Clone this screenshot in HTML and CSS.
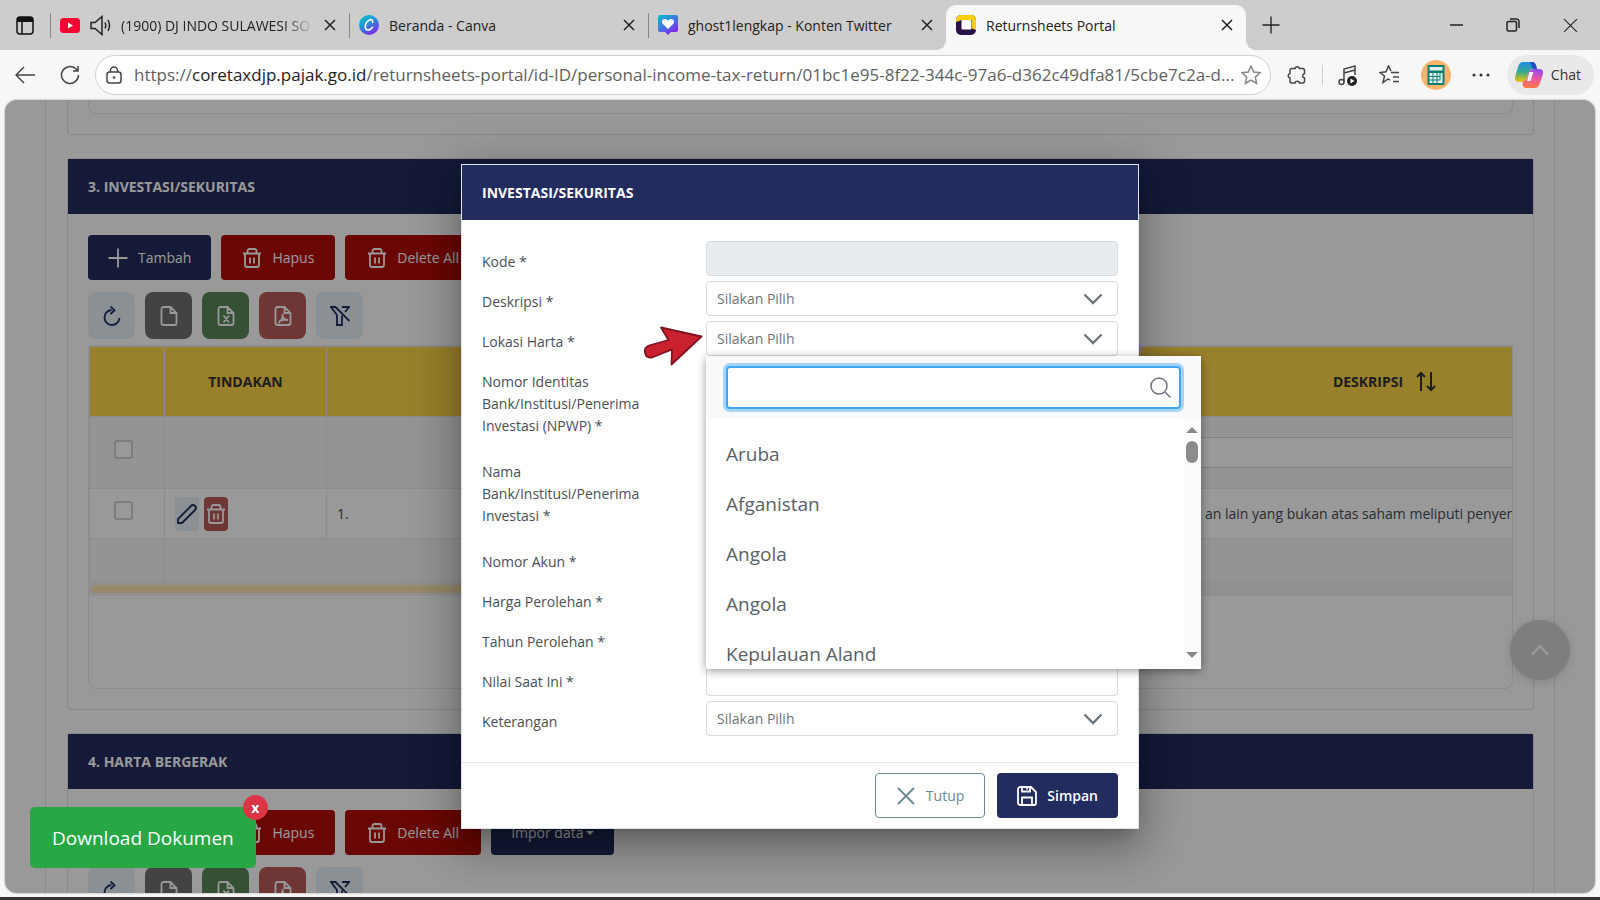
FILE: index.html
```html
<!DOCTYPE html>
<html lang="id">
<head>
<meta charset="utf-8">
<title>Returnsheets Portal</title>
<link rel="stylesheet" href="styles.css">
</head>
<body>
<svg class="sprite" aria-hidden="true">
  <symbol id="i-x" viewBox="0 0 14 14"><path d="M2 2l10 10M12 2L2 12"/></symbol>
  <symbol id="i-trash" viewBox="0 0 20 20"><path d="M1 5.500h18M5.500 5.500V3a2 2 0 0 1 2-2h5a2 2 0 0 1 2 2v2.500M3 5.500V17a2 2 0 0 0 2 2h10a2 2 0 0 0 2-2V5.500M8 9.500v6M12 9.500v6"/></symbol>
  <symbol id="i-plus" viewBox="0 0 20 20"><path d="M10 0.500v19M0.500 10h19"/></symbol>
  <symbol id="i-refresh" viewBox="0 0 20 20"><path d="M9.500 4A7.500 7.500 0 1 0 17.500 12M8.500 0.500L12.500 4.200 8.500 8"/></symbol>
  <symbol id="i-file" viewBox="0 0 20 20"><path d="M11.500 1H4.500a2 2 0 0 0-2 2v14a2 2 0 0 0 2 2h11a2 2 0 0 0 2-2V7zM11.500 1v6h6"/></symbol>
  <symbol id="i-excel" viewBox="0 0 20 20"><path d="M11.500 1H4.500a2 2 0 0 0-2 2v14a2 2 0 0 0 2 2h11a2 2 0 0 0 2-2V7zM11.500 1v6h6M7.500 9.500l5.500 7M13 9.500l-5.500 7"/></symbol>
  <symbol id="i-pdf" viewBox="0 0 20 20"><path d="M11.500 1H4.500a2 2 0 0 0-2 2v14a2 2 0 0 0 2 2h11a2 2 0 0 0 2-2V7zM11.500 1v6h6M9.500 8c.5 3.500-1.500 7-4 9M9.500 9c0 3 2.500 5 5.500 5M6.500 15c2.500-1.500 5-1.500 8.500-1"/></symbol>
  <symbol id="i-filter" viewBox="0 0 20 20"><path d="M12 1h7l-4 5M19.500 15L5.500 1H1l6 8v10h5V9.500"/></symbol>
  <symbol id="i-down" viewBox="0 0 20 12"><path d="M1.500 1.500L10 10l8.500-8.500"/></symbol>
</svg>

<header class="tabs">
  <button class="ib" aria-label="Tab actions"><svg width="18" height="19" viewBox="0 0 18 19"><rect x="1" y="1" width="16" height="17" rx="3" fill="none" stroke="#111" stroke-width="1.500"/><path d="M1 6V4a3 3 0 0 1 3-3h10a3 3 0 0 1 3 3v2z" fill="#111"/><path d="M6 6v12" stroke="#111" stroke-width="1.500"/></svg></button>
  <div class="tab t1">
    <svg width="20" height="15" viewBox="0 0 20 15"><rect width="20" height="15" rx="3.500" fill="#f03"/><path d="M8 4.500l5 3-5 3z" fill="#fff"/></svg>
    <svg width="21" height="21" viewBox="0 0 21 21" class="ln"><path d="M1 7.500v6h4l7 6v-18l-7 6zM15 7.500q1.500 3 0 6M18 5q3 5.500 0 11"/></svg>
    <span class="tt fade">(1900) DJ INDO SULAWESI SO</span>
    <button class="x" aria-label="Close"><svg><use href="#i-x"/></svg></button>
  </div>
  <div class="tab t2">
    <svg width="20" height="20" viewBox="0 0 20 20"><defs><linearGradient id="g1" x1="0" y1="0" x2="0.600" y2="1"><stop offset="0" stop-color="#00c4cc"/><stop offset="0.450" stop-color="#1a9ad6"/><stop offset="1" stop-color="#7d2ae8"/></linearGradient></defs><circle cx="10" cy="10" r="10" fill="url(#g1)"/><path d="M13.500 7.500c.8-2-.6-3.200-2.500-2.700-3 .8-5 4.500-4.700 7.500.3 2.700 2.500 3.300 4.700 2.200 1.200-.6 2-1.500 2.600-2.400" fill="none" stroke="#fff" stroke-width="1.600" stroke-linecap="round"/></svg>
    <span class="tt">Beranda - Canva</span>
    <button class="x" aria-label="Close"><svg><use href="#i-x"/></svg></button>
  </div>
  <div class="tab t3">
    <svg width="20" height="20" viewBox="0 0 20 20"><defs><linearGradient id="g2" x1="0" y1="0" x2="0.700" y2="1"><stop offset="0" stop-color="#00c4cc"/><stop offset="0.500" stop-color="#3b7de0"/><stop offset="1" stop-color="#8a1cf0"/></linearGradient></defs><path d="M2 0h16a2 2 0 0 1 2 2v13a2 2 0 0 1-2 2h-5l-3 3-3-3H2a2 2 0 0 1-2-2V2a2 2 0 0 1 2-2z" fill="url(#g2)"/><path d="M10 14L4.500 8.500C3 6 5 3.500 7.500 4c1.200.2 2 1 2.500 2 .5-1 1.300-1.800 2.500-2C15 3.500 17 6 15.500 8.500z" fill="#fff"/></svg>
    <span class="tt">ghost1lengkap - Konten Twitter</span>
    <button class="x" aria-label="Close"><svg><use href="#i-x"/></svg></button>
  </div>
  <div class="tab active">
    <svg width="20" height="20" viewBox="0 0 20 20"><rect width="20" height="20" rx="5" fill="#2a1145"/><path d="M0 7V5a5 5 0 0 1 5-5h10a5 5 0 0 1 5 5v10l-4-1.500V5H6z" fill="#f7cf0c"/><rect x="5.500" y="5" width="10" height="9.500" rx="1" fill="#fff"/></svg>
    <span class="tt">Returnsheets Portal</span>
    <button class="x" aria-label="Close"><svg><use href="#i-x"/></svg></button>
  </div>
  <button class="ib new" aria-label="New tab"><svg width="18" height="18" viewBox="0 0 20 20" class="ln"><use href="#i-plus"/></svg></button>
  <div class="win">
    <button class="ib" aria-label="Minimize"><svg width="13" height="14" viewBox="0 0 13 14" class="ln"><path d="M0 7h13"/></svg></button>
    <button class="ib" aria-label="Restore"><svg width="14" height="14" viewBox="0 0 14 14" class="ln"><rect x="1" y="3.500" width="9.500" height="9.500" rx="1.500"/><path d="M4 1h6.500a2.500 2.500 0 0 1 2.500 2.500V10"/></svg></button>
    <button class="ib" aria-label="Close window"><svg width="15" height="15" viewBox="0 0 14 14" class="ln thin"><path d="M1 1l12 12M13 1L1 13"/></svg></button>
  </div>
</header>

<nav class="bar">
  <button class="ib back" aria-label="Back"><svg width="20" height="18" viewBox="0 0 20 18" class="ln g"><path d="M20 9H1M9 1L1 9l8 8"/></svg></button>
  <button class="ib reload" aria-label="Reload"><svg width="20" height="20" viewBox="0 0 20 20" class="ln g"><path d="M18.500 10A8.500 8.500 0 1 1 15.500 3.500L18 6M18 1v5h-5"/></svg></button>
  <div class="addr">
    <svg width="16" height="18" viewBox="0 0 16 18" class="ln g"><rect x="1" y="6" width="14" height="11" rx="2.500"/><path d="M4.500 6V4.500a3.500 3.500 0 0 1 7 0V6"/><circle cx="8" cy="11.500" r="0.600"/></svg>
    <span class="url">https://<b>coretaxdjp.pajak.go.id</b>/returnsheets-portal/id-ID/personal-income-tax-return/01bc1e95-8f22-344c-97a6-d362c49dfa81/5cbe7c2a-d...</span>
    <button class="ib star" aria-label="Favorite"><svg width="20" height="20" viewBox="0 0 20 20" class="ln lg"><path d="M10 1l2.700 6 6.300.7-4.700 4.400 1.400 6.400L10 15.200l-5.700 3.300 1.400-6.400L1 7.700 7.300 7z"/></svg></button>
  </div>
  <button class="ib ext" aria-label="Extensions"><svg width="20" height="20" viewBox="0 0 20 20" class="ln g"><path d="M5 3.500h3a2.300 2.300 0 0 1 4.500 0h3a2 2 0 0 1 2 2v3a2.300 2.300 0 0 0 0 4.500v3a2 2 0 0 1-2 2h-3a2.300 2.300 0 0 0-4.500 0H5a2 2 0 0 1-2-2v-3a2.300 2.300 0 0 1 0-4.500v-3a2 2 0 0 1 2-2z"/></svg></button>
  <i class="sep"></i>
  <button class="ib" aria-label="Media"><svg width="20" height="21" viewBox="0 0 20 21" class="ln g"><circle cx="3.500" cy="17" r="2.500"/><path d="M6 17V4l11-3v9M6 8l11-3"/><circle cx="14" cy="16" r="5" fill="#222" stroke="none"/><path d="M12.500 13.500l4 2.500-4 2.500z" fill="#fff" stroke="none"/></svg></button>
  <button class="ib" aria-label="Favorites"><svg width="21" height="20" viewBox="0 0 21 20" class="ln g"><path d="M12 7.500h8M14 12h6M14 16.500h6M11 15L9 14l-5 3.500L5.500 11 1 7.500l6-.8L9.500 1 12 6"/></svg></button>
  <button class="ib" aria-label="Profile"><svg width="30" height="30" viewBox="0 0 30 30"><circle cx="15" cy="15" r="15" fill="#f9b46c"/><rect x="6.500" y="5" width="17" height="20" rx="1" fill="#0f7d70"/><path d="M8.500 7h13v3.500h-13zM8.500 13h3v3h-3zM12.500 13h3v3h-3zM16.500 13h2v3h-2zM8.500 17h3v2.500h-3zM12.500 17h3v2.500h-3zM16.500 17h2v2.500h-2zM8.500 20.500h3V23h-3zM12.500 20.500h3V23h-3zM19.500 13h2v10h-5v-2.500h3z" fill="#e3f2ee"/></svg></button>
  <button class="ib" aria-label="More"><svg width="18" height="4" viewBox="0 0 18 4"><g fill="#333"><circle cx="2" cy="2" r="1.500"/><circle cx="9" cy="2" r="1.500"/><circle cx="16" cy="2" r="1.500"/></g></svg></button>
  <button class="chat"><svg width="28" height="26" viewBox="0 0 28 26"><defs><linearGradient id="g3" x1="0" y1="0" x2="0" y2="1"><stop offset="0" stop-color="#1a8fe8"/><stop offset="0.500" stop-color="#36a98b"/><stop offset="1" stop-color="#f5c400"/></linearGradient><linearGradient id="g4" x1="0.500" y1="0" x2="0.300" y2="1"><stop offset="0" stop-color="#9a4bea"/><stop offset="0.500" stop-color="#ef5a9a"/><stop offset="1" stop-color="#ff7a3d"/></linearGradient></defs><path d="M8 0h9q3 0 4 4l1 3h-5q-2 0-3 3l-2 6q-1 4-5 4H4q-5 0-4-5L3 5q1.500-5 5-5z" fill="url(#g3)"/><path d="M15 0h3q2 0 3 3l1 4h-4z" fill="#1e4fc4"/><path d="M20 26h-9q-3 0-3.500-4L8 19q3 0 4-3l2-6q1-3 5-3h5q5 0 4 5l-3 9q-1.500 5-5 5z" fill="url(#g4)"/><path d="M14.500 10h4l-3 9H12z" fill="#f4eef4"/></svg>Chat</button>
</nav>

<main class="view">
  <div class="page">
    <section class="card cut"><div class="box"></div></section>

    <section class="card">
      <h2>3. INVESTASI/SEKURITAS</h2>
      <div class="cbody">
        <div class="acts">
          <button class="btn navy"><svg><use href="#i-plus"/></svg>Tambah</button>
          <button class="btn red"><svg><use href="#i-trash"/></svg>Hapus</button>
          <button class="btn red wide"><svg><use href="#i-trash"/></svg>Delete All</button>
          <button class="btn navy">Impor data<i class="caret"></i></button>
        </div>
        <div class="tools">
          <button class="sq pale" aria-label="Muat ulang"><svg><use href="#i-refresh"/></svg></button>
          <button class="sq gray" aria-label="CSV"><svg><use href="#i-file"/></svg></button>
          <button class="sq green" aria-label="Excel"><svg><use href="#i-excel"/></svg></button>
          <button class="sq rose" aria-label="PDF"><svg><use href="#i-pdf"/></svg></button>
          <button class="sq pale" aria-label="Hapus filter"><svg><use href="#i-filter"/></svg></button>
        </div>
        <div class="box tablebox">
          <div class="scroller">
            <table>
              <colgroup><col class="c1"><col class="c2"><col><col class="c4"></colgroup>
              <thead><tr><th></th><th>TINDAKAN</th><th></th><th><span class="sort">DESKRIPSI <svg width="20" height="21" viewBox="0 0 20 21"><path d="M5 20V2M1 6l4-4 4 4M15 1v18M11 15l4 4 4-4"/></svg></span></th></tr></thead>
              <tbody>
                <tr class="filter"><td class="ck"><input type="checkbox" aria-label="Pilih semua"></td><td></td><td></td><td class="fl"><input type="text" aria-label="Filter deskripsi"></td></tr>
                <tr class="data"><td class="ck"><input type="checkbox" aria-label="Pilih baris 1"></td><td><div class="rowacts"><button class="mini pale" aria-label="Ubah"><svg viewBox="0 0 20 20"><path d="M1 19v-4L14 2a2.800 2.800 0 0 1 4 4L5 19z"/></svg></button><button class="mini rose" aria-label="Hapus"><svg><use href="#i-trash"/></svg></button></div></td><td>1.</td><td class="desc">an lain yang bukan atas saham meliputi penyer</td></tr>
                <tr class="foot"><td></td><td colspan="3"></td></tr>
              </tbody>
            </table>
            <div class="track"><i></i></div>
          </div>
        </div>
      </div>
    </section>

    <section class="card">
      <h2>4. HARTA BERGERAK</h2>
      <div class="cbody">
        <div class="acts">
          <button class="btn navy"><svg><use href="#i-plus"/></svg>Tambah</button>
          <button class="btn red"><svg><use href="#i-trash"/></svg>Hapus</button>
          <button class="btn red wide"><svg><use href="#i-trash"/></svg>Delete All</button>
          <button class="btn navy">Impor data<i class="caret"></i></button>
        </div>
        <div class="tools">
          <button class="sq pale" aria-label="Muat ulang"><svg><use href="#i-refresh"/></svg></button>
          <button class="sq gray" aria-label="CSV"><svg><use href="#i-file"/></svg></button>
          <button class="sq green" aria-label="Excel"><svg><use href="#i-excel"/></svg></button>
          <button class="sq rose" aria-label="PDF"><svg><use href="#i-pdf"/></svg></button>
          <button class="sq pale" aria-label="Hapus filter"><svg><use href="#i-filter"/></svg></button>
        </div>
      </div>
    </section>
  </div>

  <button class="totop" aria-label="Ke atas"><svg width="20" height="12" viewBox="0 0 20 12"><path d="M2 10.500L10 2l8 8.500"/></svg></button>

  <div class="overlay">
    <div class="modal" role="dialog" aria-labelledby="mt">
      <h1 id="mt">INVESTASI/SEKURITAS</h1>
      <form class="form">
        <label for="f1">Kode *</label><input id="f1" class="fld" type="text" disabled>
        <label for="f2">Deskripsi *</label>
        <div class="sel"><select id="f2" class="fld"><option>Silakan Pilih</option></select><svg><use href="#i-down"/></svg></div>
        <label for="f3">Lokasi Harta *</label>
        <div class="sel"><select id="f3" class="fld"><option>Silakan Pilih</option></select><svg><use href="#i-down"/></svg>
          <svg class="pointer" viewBox="0 0 60 40"><path d="M18 1.500L58.500 10.500 28.500 38.500 29 23.500 9 31.500C1.500 32.500-1 22.500 6 19.500L25.500 14z"/></svg>
          <div class="drop">
            <div class="find"><input type="text" aria-label="Cari"><svg width="21" height="21" viewBox="0 0 21 21"><circle cx="9" cy="9" r="8"/><path d="M15 15l5.500 5.500"/></svg></div>
            <div class="list">
              <ul role="listbox"><li role="option">Aruba</li><li role="option">Afganistan</li><li role="option">Angola</li><li role="option">Angola</li><li role="option">Kepulauan Aland</li></ul>
              <div class="sb"><i class="up"></i><i class="thumb"></i><i class="dn"></i></div>
            </div>
          </div>
        </div>
        <label class="tall" for="f4">Nomor Identitas Bank/Institusi/Penerima Investasi (NPWP) *</label><input id="f4" class="fld" type="text">
        <label class="tall" for="f5">Nama Bank/Institusi/Penerima Investasi *</label><input id="f5" class="fld" type="text">
        <label for="f6">Nomor Akun *</label><input id="f6" class="fld" type="text">
        <label for="f7">Harga Perolehan *</label><input id="f7" class="fld" type="text">
        <label for="f8">Tahun Perolehan *</label><input id="f8" class="fld" type="text">
        <label for="f9">Nilai Saat Ini *</label><input id="f9" class="fld" type="text">
        <label for="f10">Keterangan</label>
        <div class="sel"><select id="f10" class="fld"><option>Silakan Pilih</option></select><svg><use href="#i-down"/></svg></div>
      </form>
      <footer>
        <button class="btn line"><svg viewBox="0 0 20 20"><path d="M2 2l16 16M18 2L2 18"/></svg>Tutup</button>
        <button class="btn navy bold"><svg viewBox="0 0 20 20"><path d="M3.500 1H14l5 5v11a2 2 0 0 1-2 2H3.500a2.500 2.500 0 0 1-2.500-2.500v-13A2.500 2.500 0 0 1 3.500 1zM5 1v4.500h8V1M5 19v-7.500h10V19M10 1v2.500"/></svg>Simpan</button>
      </footer>
    </div>
  </div>

  <div class="dl"><button class="dlb">Download Dokumen</button><button class="dlx" aria-label="Tutup">x</button></div>
</main>
<div class="task"></div>
</body>
</html>
```
FILE: styles.css
```css
* { box-sizing: border-box; }
body {
  margin: 0;
  height: 100vh;
  display: flex;
  flex-direction: column;
  overflow: hidden;
  background: #f7f7f7;
  color: #495057;
  font: 14px/22px "Open Sans", "Noto Sans", sans-serif;
}
button, input, select { font: inherit; margin: 0; }
button { border: 0; padding: 0; background: none; color: inherit; }
svg { flex: none; display: block; }
h1, h2, ul { margin: 0; padding: 0; }
.sprite { position: absolute; width: 0; height: 0; }
.ib { display: flex; align-items: center; justify-content: center; }
.ln { fill: none; stroke: #222; stroke-width: 1.5; }
.ln.thin { stroke-width: 1; }
.ln.g { stroke: #444; }
.ln.lg { stroke: #888; }

/* browser tabs */
.tabs { display: flex; align-items: center; height: 50px; padding-left: 16px; background: #cdcdcd; color: #222; flex: none; }
.tab { display: flex; align-items: center; gap: 10px; padding: 0 12px 0 10px; position: relative; height: 50px; }
.tab:not(.active)::before { content: ""; width: 1px; height: 25px; background: #888; position: absolute; left: 0; top: 13px; }
.t1 { width: 299px; margin-left: 16px; }
.t2 { width: 299px; }
.t3 { width: 298px; }
.active { width: 300px; height: 45px; align-self: flex-end; background: #f7f7f7; border-radius: 10px 10px 0 0; padding-bottom: 5px; }
.active::before, .active::after { content: ""; position: absolute; bottom: 0; width: 10px; height: 10px; }
.active::before { left: -10px; background: radial-gradient(circle at 0 0, #cdcdcd 10px, #f7f7f7 10px); }
.active::after { right: -10px; background: radial-gradient(circle at 100% 0, #cdcdcd 10px, #f7f7f7 10px); }
.tab .tt { flex: 1; white-space: nowrap; overflow: hidden; padding-top: 1px; }
.tab .fade { -webkit-mask-image: linear-gradient(90deg, #000 85%, transparent); mask-image: linear-gradient(90deg, #000 85%, transparent); }
.x svg { width: 14px; height: 14px; fill: none; stroke: #222; stroke-width: 1.5; }
.new { margin-left: 16px; }
.win { margin-left: auto; display: flex; gap: 43px; padding-right: 22px; }

/* address bar */
.bar { display: flex; align-items: center; height: 50px; padding: 0 6px 0 15px; gap: 21px; flex: none; }
.back { margin-right: 4px; }
.addr { flex: 1; display: flex; align-items: center; gap: 12px; height: 40px; margin-left: -6px; padding: 0 9px 0 10px; background: #fff; border: 1px solid #d0d0d0; border-radius: 20px; min-width: 0; }
.url { flex: 1; font-size: 17px; color: #5f5f5f; white-space: nowrap; overflow: hidden; }
.url b { font-weight: 400; color: #222; }
.star { margin-left: -10px; }
.ext { margin-left: -5px; }
.sep { width: 1px; height: 20px; background: #ccc; margin: 0 -6px; }
.chat { display: flex; align-items: center; gap: 8px; height: 40px; padding: 0 13px 0 8px; margin-left: -4px; border-radius: 20px; background: #e9e9e9; color: #333; }

/* web page area */
.view { position: relative; flex: 1; min-height: 0; margin: 0 5px 4px; border-radius: 12px; overflow: hidden; background: #fff; box-shadow: 0 0 2px #888; }
.task { flex: none; height: 3px; background: #353335; }
.page { margin: 0 40px; padding: 0 20px 0 21px; border: solid #e4e8ea; border-width: 0 1px; height: 100%; overflow: hidden; }
.card { border: 1px solid #dfe3e6; border-radius: 4px; margin-bottom: 23px; }
.cut { height: 35px; border-top: 0; padding: 0 20px; border-radius: 0 0 4px 4px; }
.box { border: 1px solid #ececec; border-radius: 0 0 8px 8px; }
.cut .box { border-top: 0; height: 14px; }
h2, h1 { background: #222c5e; color: #fff; font-size: 14px; line-height: 22px; font-weight: 700; padding: 17px 20px 16px; }
.cbody { padding: 21px 20px 20px; }
.acts { display: flex; gap: 10px; }
.btn { display: flex; align-items: center; justify-content: center; gap: 10px; height: 45px; padding: 0 20px; border-radius: 4px; color: #fff; }
.btn svg, .sq svg { width: 20px; height: 20px; fill: none; stroke: currentColor; stroke-width: 1.8; }
.navy { background: #222c5e; }
.red { background: #b20d05; padding: 0 21px; }
.red.wide { padding: 0 22px; }
.caret { border: 4px solid transparent; border-top-color: currentColor; border-bottom: 0; margin-left: -8px; }
.tools { display: flex; gap: 10px; margin: 12px 0 6px; }
.sq { width: 47px; height: 47px; border-radius: 8px; display: flex; align-items: center; justify-content: center; color: #fff; }
.pale { background: #e6f1f5; color: #222c5e; }
.gray { background: #717171; }
.green { background: #5a855a; }
.rose { background: #b95a5a; color: #fff; }
.tablebox { min-height: 344px; }
.scroller { overflow: hidden; }
table { border-collapse: collapse; table-layout: fixed; width: calc(100% + 117px); }
.c1 { width: 75px; }
.c2 { width: 162px; }
.c4 { width: 488px; }
th { height: 70px; background: #ffd549; color: #333; font-weight: 700; border: 1px solid #e9e9ee; padding: 0; }
td { border: 1px solid #eaebed; padding: 0 10px; color: #444b55; }
th:last-child, td:last-child { border-left: 0; }
.sort { display: inline-flex; gap: 13px; align-items: center; }
.sort svg { fill: none; stroke: #333; stroke-width: 2; }
.filter td, .foot td { background: #f7f7f7; }
.filter td { height: 72px; }
.data td { height: 50px; }
.foot td { height: 43px; }
td.ck { text-align: center; vertical-align: middle; padding: 0 16px 9px 8px; }
.ck input { appearance: none; width: 19px; height: 19px; border: 2px solid #ced0da; border-radius: 3px; background: #fff; vertical-align: middle; }
.fl input { width: 100%; height: 31px; border: 1px solid #d3d5dc; background: #fff; display: block; }
.desc { white-space: nowrap; overflow: hidden; }
td.desc { padding-left: 64px; }
.rowacts { display: flex; gap: 5px; }
.mini { width: 24px; height: 34px; border-radius: 4px; display: flex; align-items: center; justify-content: center; }
.mini svg { width: 20px; height: 20px; fill: none; stroke: currentColor; stroke-width: 1.8; }
.track { height: 14px; padding: 3px 2px; background: #f0f0f0; }
.track i { display: block; width: 60%; height: 8px; border-radius: 4px; background: #fae6b0; }
.totop { position: absolute; right: 25px; bottom: 213px; width: 60px; height: 60px; border-radius: 50%; background: #d3d3d3; display: flex; align-items: center; justify-content: center; box-shadow: 0 2px 10px rgba(0, 0, 0, 0.15); }
.totop svg { fill: none; stroke: #fff; stroke-width: 2.5; }

/* dialog */
.overlay { position: absolute; inset: 0; background: rgba(0, 0, 0, 0.4); display: flex; align-items: center; justify-content: center; }
.modal { width: 678px; background: #fff; border: 1px solid #dfe3ea; box-shadow: 0 11px 15px -7px rgba(0, 0, 0, 0.2), 0 24px 38px 3px rgba(0, 0, 0, 0.14), 0 9px 46px 8px rgba(0, 0, 0, 0.2); }
.form { display: grid; grid-template-columns: 224px 1fr; row-gap: 5px; padding: 21px 20px 26px; }
.form label { padding-top: 10px; height: 35px; padding-right: 40px; }
.form label.tall { height: 85px; }
.fld { width: 100%; height: 35px; border: 1px solid #d6dce1; border-radius: 4px; background: #fff; padding: 0 10px; color: #6c757d; }
.fld:disabled { background: #e9ecef; }
select.fld { appearance: none; display: block; }
.sel { position: relative; }
.sel > svg:not(.pointer) { position: absolute; right: 15px; top: 12px; width: 20px; height: 12px; fill: none; stroke: #6c757d; stroke-width: 2.4; pointer-events: none; }
.sel > svg.pointer { position: absolute; right: calc(100% + 3px); top: 5px; width: 60px; height: 40px; fill: #cb202d; stroke: #7d1520; stroke-width: 1.8; stroke-linejoin: round; }
.drop { position: absolute; left: 0; top: 100%; width: 495px; background: #fff; border-radius: 2px; box-shadow: 0 2px 10px rgba(0, 0, 0, 0.4); z-index: 2; }
.find { position: relative; padding: 10px 20px; background: #f8f9fb; }
.find input { display: block; width: 100%; height: 43px; border: 2px solid #42a5f9; border-radius: 4px; background: #fff; box-shadow: 0 0 0 3px #a6d5fa; outline: 0; padding: 0 44px 0 12px; }
.find svg { position: absolute; right: 30px; top: 21px; fill: none; stroke: #6c757d; stroke-width: 1.5; }
.list { display: flex; height: 250px; overflow: hidden; }
.list ul { flex: 1; list-style: none; padding-top: 10px; font-size: 19px; line-height: 50px; color: #5a6168; }
.list li { padding-left: 20px; }
.sb { width: 18px; padding: 8px 0 11px; background: #fcfcfc; display: flex; flex-direction: column; align-items: center; gap: 8px; }
.up, .dn { border: 6px solid transparent; }
.up { border-bottom-color: #8b8b8b; border-top: 0; }
.dn { border-top-color: #8b8b8b; border-bottom: 0; margin-top: auto; }
.thumb { width: 12px; height: 22px; border-radius: 6px; background: #8b8b8b; }
.modal footer { display: flex; justify-content: flex-end; gap: 12px; padding: 10px 20px; border-top: 1px solid #e3e6ea; }
.line { border: 1px solid #6c8794; color: #6c8794; background: #fff; }
.bold { font-weight: 600; }

/* floating download */
.dl { position: absolute; left: 25px; bottom: 25px; }
.dlb { height: 61px; padding: 0 22px; border-radius: 5px; background: #28a745; color: #fff; font-size: 19px; line-height: 26px; }
.dlx { position: absolute; right: -12px; top: -12px; width: 25px; height: 25px; border-radius: 50%; background: #dc3545; color: #fff; font-weight: 700; line-height: 22px; }
```
